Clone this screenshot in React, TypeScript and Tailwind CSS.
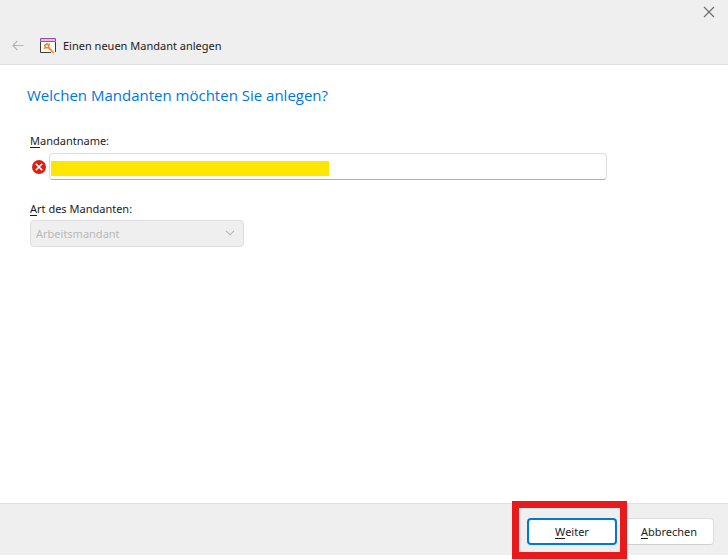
import { useState } from 'react'

const TENANT_TYPES = ['Arbeitsmandant', 'Mustermandant']

function WizardIcon() {
  return (
    <svg width="16" height="16" viewBox="0 0 16 16" fill="none" aria-hidden="true">
      <path d="M0 4h16v11H0z" fill="#fff" />
      <path d="M.5 4v10.5H11M15.5 4v10" stroke="#3a3a3a" />
      <path d="M.5.5h15v3H.5z" fill="#dcbfe0" stroke="#9b4f9f" />
      <path d="M5.2 6.4h3.6v3.4H5.2z" stroke="#f0862b" strokeWidth="1.5" />
      <path d="M7 5v1M4 10.8l1.2-1M8.8 6.4l.8-.6M4 7.6h1" stroke="#f0862b" strokeWidth="1.4" />
      <path d="M8.8 9.8l5 5.2" stroke="#f0862b" strokeWidth="1.8" />
    </svg>
  )
}

function ErrorIcon() {
  return (
    <svg width="14" height="14" viewBox="0 0 14 14" fill="none" role="img" aria-label="Fehler">
      <circle cx="7" cy="7" r="7" fill="#d42314" />
      <path d="M3.8 3.8l6.4 6.4M10.2 3.8l-6.4 6.4" stroke="#fff" strokeWidth="1.6" />
    </svg>
  )
}

export default function App() {
  const [name, setName] = useState('')
  const [type, setType] = useState(TENANT_TYPES[0])

  return (
    <div className="flex min-h-screen flex-col bg-white pb-[5px] font-['Noto_Sans','Open_Sans',sans-serif] text-[11px] leading-4 text-[#1b1b1b]">
      <header className="border-b border-[#dfdfdf] bg-[#efefef]">
        <div className="flex justify-end px-3 pt-[6px]">
          <button type="button" aria-label="Schließen" className="flex h-3 w-[14px] items-center justify-center">
            <svg width="12" height="12" viewBox="0 0 12 12" fill="none" aria-hidden="true">
              <path d="M1 1l10 10M11 1L1 11" stroke="#6b6b6b" strokeWidth="1.1" />
            </svg>
          </button>
        </div>
        <div className="flex items-center px-3 pt-5 pb-[10px]">
          <button type="button" disabled aria-label="Zurück" className="mr-4">
            <svg width="12" height="12" viewBox="0 0 12 12" fill="none" aria-hidden="true">
              <path d="M11.5 5.5H.8M5.3 1L.8 5.5 5.3 10" stroke="#b4b4b4" strokeWidth="1.1" />
            </svg>
          </button>
          <WizardIcon />
          <h1 className="ml-[7px]">Einen neuen Mandant anlegen</h1>
        </div>
      </header>

      <main className="flex-1 pt-[18px] pr-[121px] pl-[30px]">
        <h2 className="-ml-[3px] font-['Open_Sans',sans-serif] text-[15px] leading-6 text-[#0078d4]">
          Welchen Mandanten möchten Sie anlegen?
        </h2>

        <label htmlFor="name" className="mt-[26px] block">
          <span className="underline underline-offset-2">M</span>andantname:
        </label>
        <div className="mt-1 flex items-center gap-1">
          <div className="w-[15px] pl-[2px]">
            <ErrorIcon />
          </div>
          <div className="relative flex-1">
            <input
              id="name"
              value={name}
              onChange={e => setName(e.target.value)}
              className="block h-[27px] w-full rounded border border-[#dedede] border-b-[#b0b0b0] bg-white px-[5px] outline-none"
            />
            <span className="pointer-events-none absolute top-2 left-[2px] h-[15px] w-[278px] bg-[#ffe600]" />
          </div>
        </div>

        <label htmlFor="type" className="mt-[21px] block">
          <span className="underline underline-offset-2">A</span>rt des Mandanten:
        </label>
        <div className="relative mt-[3px] w-[214px]">
          <select
            id="type"
            disabled
            value={type}
            onChange={e => setType(e.target.value)}
            className="block h-[27px] w-full appearance-none rounded border border-[#dedede] bg-[#efefef] px-[5px] text-[#b8b8b8] opacity-100"
          >
            {TENANT_TYPES.map(t => (
              <option key={t}>{t}</option>
            ))}
          </select>
          <svg width="10" height="6" viewBox="0 0 10 6" fill="none" className="pointer-events-none absolute top-[10px] right-[9px]" aria-hidden="true">
            <path d="M1 .8l4 4 4-4" stroke="#b4b4b4" strokeWidth="1.1" />
          </svg>
        </div>
      </main>

      <footer className="flex justify-end gap-[7px] border-t border-[#dfdfdf] bg-[#efefef] pt-[14px] pr-[14px] pb-[10px]">
        <div className="relative z-10">
          <button type="button" className="block h-[27px] w-[90px] rounded border-2 border-[#0078d4] bg-white">
            <span className="underline underline-offset-2">W</span>eiter
          </button>
          <span className="pointer-events-none absolute -top-[17px] -right-[10px] -bottom-[14px] -left-[15px] border-[7px] border-[#e81a1c]" />
        </div>
        <button type="button" className="h-[27px] w-[90px] rounded border border-[#dedede] border-b-[#d0d0d0] bg-white">
          <span className="underline underline-offset-2">A</span>bbrechen
        </button>
      </footer>
    </div>
  )
}
